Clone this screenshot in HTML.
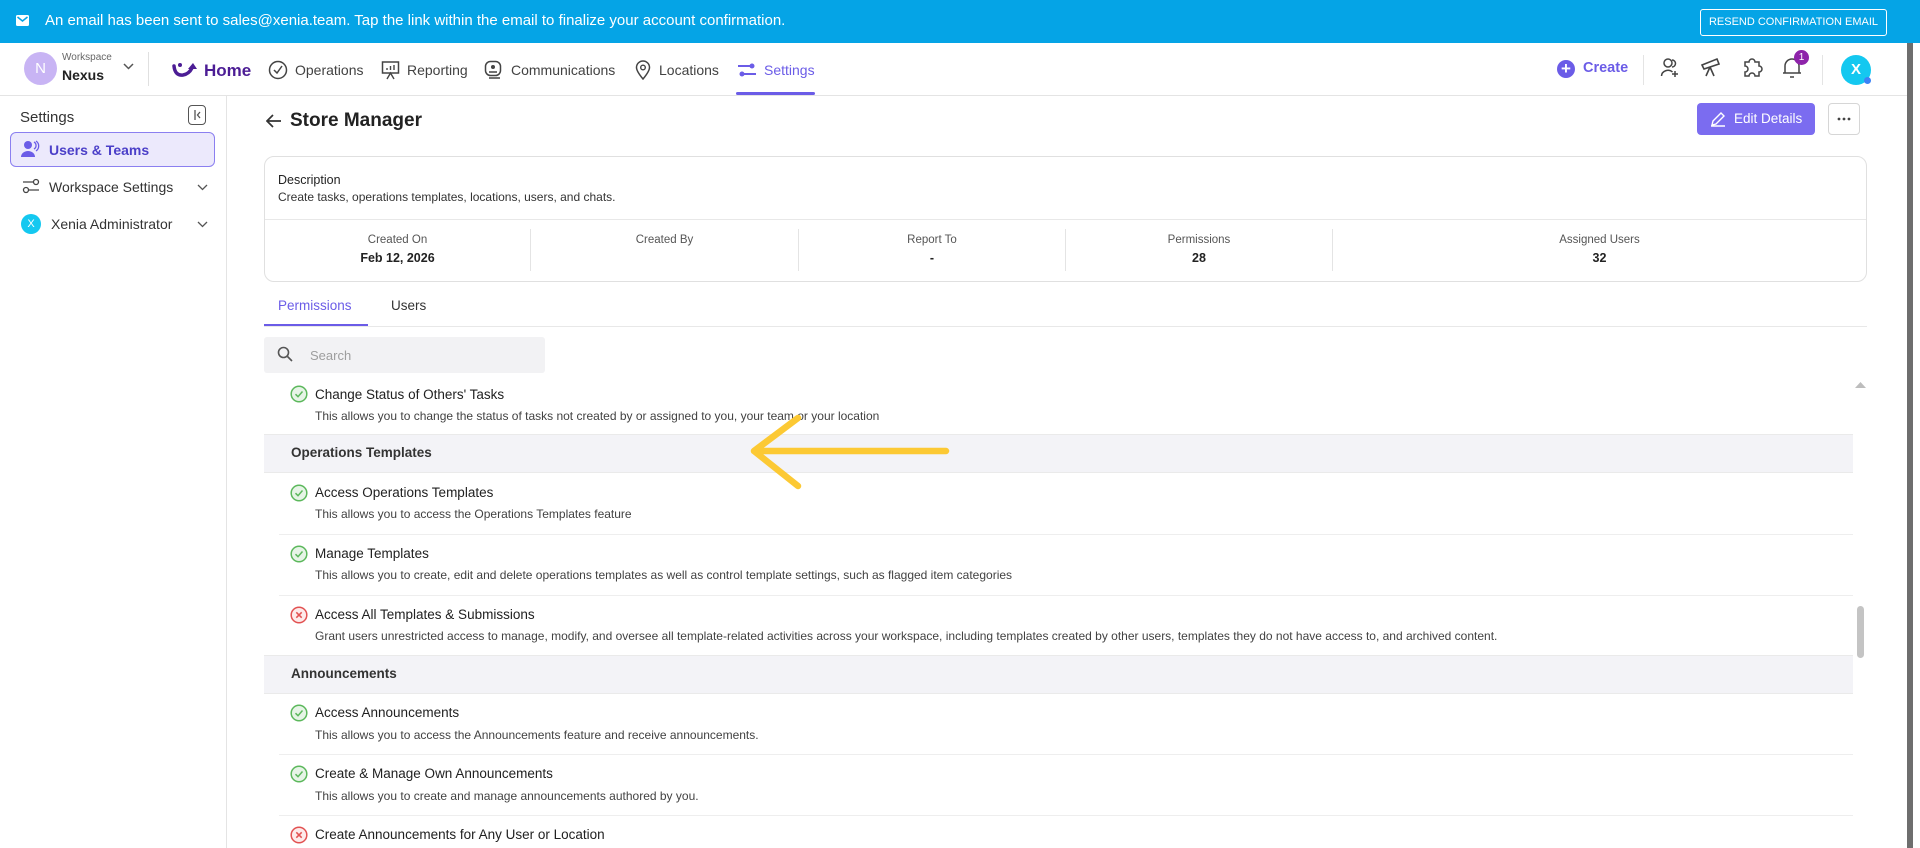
<!DOCTYPE html>
<html><head><meta charset="utf-8"><style>
*{margin:0;padding:0;box-sizing:border-box}
body{width:1920px;height:848px;overflow:hidden;background:#fff;font-family:"Liberation Sans",sans-serif;color:#212121;position:relative}
.a{position:absolute}
.t{font-size:13.5px;color:#212121;white-space:nowrap}
.d{font-size:12px;color:#424242;white-space:nowrap}
.nav{font-size:14px;color:#424242;white-space:nowrap}
.hr{position:absolute;height:1px;background:#e8e8e8}
.sec{position:absolute;left:264px;width:1589px;background:#f3f3f7;border-top:1px solid #eaeaea;border-bottom:1px solid #eaeaea}
.sec span{position:absolute;left:27px;top:10px;font-size:13.5px;font-weight:bold;color:#333}
</style></head><body>
<div class="a" style="left:0;top:0;width:1920px;height:43px;background:#05a4e6"></div>
<svg class="a" style="left:16px;top:15px" width="13" height="11"><rect x="0" y="0" width="13" height="11" rx="1.5" fill="#fff"/><path d="M1.5 2 L6.5 6 L11.5 2" stroke="#05a4e6" stroke-width="1.5" fill="none"/></svg>
<div class="a" style="left:45px;top:12px;font-size:15px;color:#fff;white-space:nowrap">An email has been sent to sales@xenia.team. Tap the link within the email to finalize your account confirmation.</div>
<div class="a" style="left:1700px;top:9px;width:187px;height:27px;border:1px solid #fff;border-radius:3px;color:#fff;font-size:11px;text-align:center;line-height:25px">RESEND CONFIRMATION EMAIL</div>
<div class="a" style="left:1907px;top:43px;width:6px;height:805px;background:#6e6e6e"></div>
<div class="hr" style="left:0;top:95px;width:1907px;background:#e4e4e4"></div>
<div class="a" style="left:24px;top:52px;width:33px;height:33px;border-radius:50%;background:#c8b4f4;color:#fff;font-size:15px;text-align:center;line-height:33px">N</div>
<div class="a" style="left:62px;top:52px;font-size:10px;color:#666">Workspace</div>
<div class="a" style="left:62px;top:67px;font-size:14px;font-weight:bold;color:#222">Nexus</div>
<svg class="a" style="left:123px;top:63px" width="11" height="8"><path d="M1 1 L5.5 5.5 L10 1" stroke="#555" stroke-width="1.5" fill="none"/></svg>
<div class="a" style="left:148px;top:52px;width:1px;height:34px;background:#e0e0e0"></div>
<svg class="a" style="left:171px;top:60px" width="32" height="20"><path d="M3 6 Q4 16 12 15 Q18 14 21 8" stroke="#4c1d95" stroke-width="3.5" fill="none" stroke-linecap="round"/><path d="M17 9 L22 3 L26 9 Z" fill="#4c1d95"/><circle cx="9" cy="5" r="2" fill="#4c1d95"/></svg>
<div class="a" style="left:204px;top:61px;font-size:17px;color:#4c1d95;font-weight:bold">Home</div>
<svg class="a" style="left:268px;top:60px" width="20" height="20"><circle cx="10" cy="10" r="8.5" stroke="#444" stroke-width="1.5" fill="none"/><path d="M6 10 L9 13 L14 6" stroke="#444" stroke-width="1.5" fill="none"/></svg>
<div class="a nav" style="left:295px;top:62px">Operations</div>
<svg class="a" style="left:381px;top:60px" width="19" height="20"><rect x="1.5" y="2" width="16" height="11" stroke="#444" stroke-width="1.5" fill="none"/><path d="M6 10V8M9.5 10V6M13 10V5M6 19L9.5 13L13 19" stroke="#444" stroke-width="1.4" fill="none"/></svg>
<div class="a nav" style="left:407px;top:62px">Reporting</div>
<svg class="a" style="left:484px;top:60px" width="20" height="20"><rect x="1.5" y="1.5" width="15" height="14" rx="5" stroke="#444" stroke-width="1.5" fill="none"/><circle cx="9" cy="7" r="2" fill="#444"/><path d="M5 12h8M5 18h11" stroke="#444" stroke-width="1.5"/></svg>
<div class="a nav" style="left:511px;top:62px">Communications</div>
<svg class="a" style="left:635px;top:60px" width="16" height="20"><path d="M8 19 C3 13 1.5 10 1.5 7.5 A6.5 6.5 0 0 1 14.5 7.5 C14.5 10 13 13 8 19Z" stroke="#444" stroke-width="1.5" fill="none"/><circle cx="8" cy="7.5" r="2.3" stroke="#444" stroke-width="1.4" fill="none"/></svg>
<div class="a nav" style="left:659px;top:62px">Locations</div>
<svg class="a" style="left:737px;top:62px" width="20" height="16"><path d="M1 4h13M6 12h13" stroke="#6b5ce7" stroke-width="2"/><circle cx="15" cy="4" r="2.5" fill="#6b5ce7"/><circle cx="5" cy="12" r="2.5" fill="#6b5ce7"/></svg>
<div class="a nav" style="left:764px;top:62px;color:#6b5ce7">Settings</div>
<div class="a" style="left:736px;top:92px;width:79px;height:3px;background:#6b5ce7;border-radius:2px"></div>
<div class="a" style="left:1557px;top:60px;width:18px;height:18px;border-radius:50%;background:#6b5ce7;color:#fff;font-size:17px;line-height:17px;text-align:center;font-weight:bold">+</div>
<div class="a" style="left:1583px;top:60px;font-size:14.5px;color:#6b5ce7;font-weight:bold">Create</div>
<div class="a" style="left:1643px;top:55px;width:1px;height:30px;background:#e4e4e4"></div>
<svg class="a" style="left:1660px;top:57px" width="22" height="22"><circle cx="8" cy="6" r="4" stroke="#444" stroke-width="1.5" fill="none"/><path d="M12 3a3.5 3.5 0 0 1 0 7M1.5 19a6.5 6 0 0 1 11 -4M15 14v6M12 17h6" stroke="#444" stroke-width="1.5" fill="none"/></svg>
<svg class="a" style="left:1700px;top:56px" width="22" height="22"><path d="M2 9 L17 3 L19 8 L4 13Z M10 11 L6 20 M10 11 L14 20" stroke="#444" stroke-width="1.6" fill="none"/></svg>
<svg class="a" style="left:1741px;top:56px" width="22" height="22"><path d="M4 6h4a3 3 0 0 1 6 0h4v4a3 3 0 0 1 0 6v4h-4a3 3 0 0 0-6 0H4v-4a3 3 0 0 0 0-6z" stroke="#444" stroke-width="1.5" fill="none"/></svg>
<svg class="a" style="left:1781px;top:56px" width="22" height="24"><path d="M4 17 V10 a7 7 0 0 1 14 0 V17 Z M2 17h18M9 21h4" stroke="#444" stroke-width="1.5" fill="none"/></svg>
<div class="a" style="left:1794px;top:50px;width:15px;height:15px;border-radius:50%;background:#8e24aa;color:#fff;font-size:10px;text-align:center;line-height:15px">1</div>
<div class="a" style="left:1822px;top:55px;width:1px;height:30px;background:#e4e4e4"></div>
<div class="a" style="left:1841px;top:55px;width:30px;height:30px;border-radius:50%;background:#14c8f0;color:#fff;font-size:15px;text-align:center;line-height:30px;font-weight:bold">X</div>
<div class="a" style="left:1864px;top:77px;width:7px;height:7px;border-radius:50%;background:#3b82f6"></div>
<div class="a" style="left:226px;top:96px;width:1px;height:752px;background:#e4e4e4"></div>
<div class="a" style="left:20px;top:109px;font-size:15px;color:#333">Settings</div>
<div class="a" style="left:188px;top:105px;width:18px;height:20px;border:1.5px solid #555;border-radius:4px"></div>
<svg class="a" style="left:194px;top:110px" width="8" height="10"><path d="M1 0v10M6 2L3.5 5L6 8" stroke="#555" stroke-width="1.3" fill="none"/></svg>
<div class="a" style="left:10px;top:132px;width:205px;height:35px;background:#ece9fc;border:1px solid #8b7ff0;border-radius:6px"></div>
<svg class="a" style="left:21px;top:140px" width="19" height="18"><circle cx="7" cy="5" r="4" fill="#6b5ce7"/><path d="M0 17a7 6 0 0 1 14 0z" fill="#6b5ce7"/><path d="M13 2a4 4 0 0 1 0 7M15 1a6 6 0 0 1 0 10" stroke="#6b5ce7" stroke-width="1.3" fill="none"/></svg>
<div class="a" style="left:49px;top:142px;font-size:14px;color:#4b3fc8;font-weight:bold">Users &amp; Teams</div>
<svg class="a" style="left:22px;top:178px" width="18" height="16"><path d="M1 4h10M7 12h10" stroke="#444" stroke-width="1.3"/><circle cx="14" cy="4" r="2.5" stroke="#444" stroke-width="1.3" fill="none"/><circle cx="4" cy="12" r="2.5" stroke="#444" stroke-width="1.3" fill="none"/></svg>
<div class="a" style="left:49px;top:179px;font-size:14px;color:#333">Workspace Settings</div>
<svg class="a" style="left:197px;top:184px" width="11" height="7"><path d="M1 1L5.5 5.5L10 1" stroke="#555" stroke-width="1.3" fill="none"/></svg>
<div class="a" style="left:21px;top:214px;width:20px;height:20px;border-radius:50%;background:#14c8f0;color:#fff;font-size:11px;text-align:center;line-height:20px">X</div>
<div class="a" style="left:51px;top:216px;font-size:14px;color:#333">Xenia Administrator</div>
<svg class="a" style="left:197px;top:221px" width="11" height="7"><path d="M1 1L5.5 5.5L10 1" stroke="#555" stroke-width="1.3" fill="none"/></svg>
<svg class="a" style="left:266px;top:114px" width="16" height="14"><path d="M15 7H2M7 1L1 7L7 13" stroke="#333" stroke-width="1.7" fill="none"/></svg>
<div class="a" style="left:290px;top:110px;font-size:19px;font-weight:bold;color:#222">Store Manager</div>
<div class="a" style="left:1697px;top:103px;width:118px;height:32px;background:#7b6cf0;border-radius:4px;color:#fff;font-size:13.5px;line-height:32px;padding-left:37px">Edit Details</div>
<svg class="a" style="left:1710px;top:111px" width="16" height="16"><path d="M2 14 L3 10 L11 2 L14 5 L6 13 Z M1 15h14" stroke="#fff" stroke-width="1.4" fill="none"/></svg>
<div class="a" style="left:1828px;top:103px;width:32px;height:32px;border:1px solid #d6d6d6;border-radius:4px"></div>
<svg class="a" style="left:1828px;top:103px" width="32" height="32"><circle cx="11" cy="16" r="1.4" fill="#444"/><circle cx="16" cy="16" r="1.4" fill="#444"/><circle cx="21" cy="16" r="1.4" fill="#444"/></svg>
<div class="a" style="left:264px;top:156px;width:1603px;height:126px;border:1px solid #e0e0e0;border-radius:10px"></div>
<div class="a" style="left:278px;top:173px;font-size:12.5px;color:#222">Description</div>
<div class="a d" style="left:278px;top:190px;color:#333">Create tasks, operations templates, locations, users, and chats.</div>
<div class="hr" style="left:265px;top:219px;width:1601px"></div>
<div class="a" style="left:530px;top:229px;width:1px;height:42px;background:#e4e4e4"></div>
<div class="a" style="left:798px;top:229px;width:1px;height:42px;background:#e4e4e4"></div>
<div class="a" style="left:1065px;top:229px;width:1px;height:42px;background:#e4e4e4"></div>
<div class="a" style="left:1332px;top:229px;width:1px;height:42px;background:#e4e4e4"></div>
<div class="a" style="left:265px;top:234px;width:265px;text-align:center;font-size:11.5px;color:#555">Created On</div>
<div class="a" style="left:265px;top:251px;width:265px;text-align:center;font-size:12.5px;font-weight:bold;color:#222">Feb 12, 2026</div>
<div class="a" style="left:531px;top:234px;width:267px;text-align:center;font-size:11.5px;color:#555">Created By</div>
<div class="a" style="left:799px;top:234px;width:266px;text-align:center;font-size:11.5px;color:#555">Report To</div>
<div class="a" style="left:799px;top:251px;width:266px;text-align:center;font-size:12.5px;font-weight:bold;color:#222">-</div>
<div class="a" style="left:1066px;top:234px;width:266px;text-align:center;font-size:11.5px;color:#555">Permissions</div>
<div class="a" style="left:1066px;top:251px;width:266px;text-align:center;font-size:12.5px;font-weight:bold;color:#222">28</div>
<div class="a" style="left:1333px;top:234px;width:533px;text-align:center;font-size:11.5px;color:#555">Assigned Users</div>
<div class="a" style="left:1333px;top:251px;width:533px;text-align:center;font-size:12.5px;font-weight:bold;color:#222">32</div>
<div class="a" style="left:278px;top:298px;font-size:13.5px;color:#6b5ce7">Permissions</div>
<div class="a" style="left:391px;top:298px;font-size:13.5px;color:#333">Users</div>
<div class="hr" style="left:264px;top:326px;width:1603px"></div>
<div class="a" style="left:264px;top:324px;width:104px;height:2px;background:#6b5ce7"></div>
<div class="a" style="left:264px;top:337px;width:281px;height:36px;background:#f2f2f4;border-radius:3px"></div>
<svg class="a" style="left:277px;top:346px" width="16" height="16"><circle cx="6.5" cy="6.5" r="5" stroke="#555" stroke-width="1.6" fill="none"/><path d="M10.5 10.5L15 15" stroke="#555" stroke-width="1.6"/></svg>
<div class="a" style="left:310px;top:348px;font-size:13px;color:#9e9e9e">Search</div>
<svg class="a" style="left:1855px;top:381px" width="11" height="8"><path d="M0 7L5.5 1L11 7Z" fill="#bdbdbd"/></svg>
<div class="a" style="left:1857px;top:606px;width:7px;height:52px;background:#c4c4c4;border-radius:4px"></div>
<svg width="0" height="0" style="position:absolute"><defs>
<g id="ok"><circle cx="9" cy="9" r="7.8" fill="#e6f4e6" stroke="#5cb85c" stroke-width="1.5"/><path d="M5.5 9.2L8 11.7L12.5 6.5" stroke="#5cb85c" stroke-width="1.5" fill="none"/></g>
<g id="no"><circle cx="9" cy="9" r="7.8" fill="#fdeaea" stroke="#e25252" stroke-width="1.5"/><path d="M6.3 6.3L11.7 11.7M11.7 6.3L6.3 11.7" stroke="#e25252" stroke-width="1.5"/></g>
</defs></svg>
<svg class="a" style="left:290px;top:385px" width="18" height="18"><use href="#ok"/></svg>
<div class="a t" style="left:315px;top:387px">Change Status of Others' Tasks</div>
<div class="a d" style="left:315px;top:409px">This allows you to change the status of tasks not created by or assigned to you, your team or your location</div>
<div class="sec" style="top:434px;height:39px"><span>Operations Templates</span></div>
<svg class="a" style="left:290px;top:484px" width="18" height="18"><use href="#ok"/></svg>
<div class="a t" style="left:315px;top:485px">Access Operations Templates</div>
<div class="a d" style="left:315px;top:507px">This allows you to access the Operations Templates feature</div>
<div class="hr" style="left:279px;top:534px;width:1574px;background:#eeeeee"></div>
<svg class="a" style="left:290px;top:545px" width="18" height="18"><use href="#ok"/></svg>
<div class="a t" style="left:315px;top:546px">Manage Templates</div>
<div class="a d" style="left:315px;top:568px">This allows you to create, edit and delete operations templates as well as control template settings, such as flagged item categories</div>
<div class="hr" style="left:279px;top:595px;width:1574px;background:#eeeeee"></div>
<svg class="a" style="left:290px;top:606px" width="18" height="18"><use href="#no"/></svg>
<div class="a t" style="left:315px;top:607px">Access All Templates &amp; Submissions</div>
<div class="a d" style="left:315px;top:629px">Grant users unrestricted access to manage, modify, and oversee all template-related activities across your workspace, including templates created by other users, templates they do not have access to, and archived content.</div>
<div class="sec" style="top:655px;height:39px"><span>Announcements</span></div>
<svg class="a" style="left:290px;top:704px" width="18" height="18"><use href="#ok"/></svg>
<div class="a t" style="left:315px;top:705px">Access Announcements</div>
<div class="a d" style="left:315px;top:728px">This allows you to access the Announcements feature and receive announcements.</div>
<div class="hr" style="left:279px;top:754px;width:1574px;background:#eeeeee"></div>
<svg class="a" style="left:290px;top:765px" width="18" height="18"><use href="#ok"/></svg>
<div class="a t" style="left:315px;top:766px">Create &amp; Manage Own Announcements</div>
<div class="a d" style="left:315px;top:789px">This allows you to create and manage announcements authored by you.</div>
<div class="hr" style="left:279px;top:815px;width:1574px;background:#eeeeee"></div>
<svg class="a" style="left:290px;top:826px" width="18" height="18"><use href="#no"/></svg>
<div class="a t" style="left:315px;top:827px">Create Announcements for Any User or Location</div>
<svg class="a" style="left:0;top:0" width="1920" height="848"><path d="M946 451 L754 451 M798 418 L754 451 L798 486" stroke="#fcc934" stroke-width="6.5" stroke-linecap="round" stroke-linejoin="round" fill="none"/></svg>
</body></html>
